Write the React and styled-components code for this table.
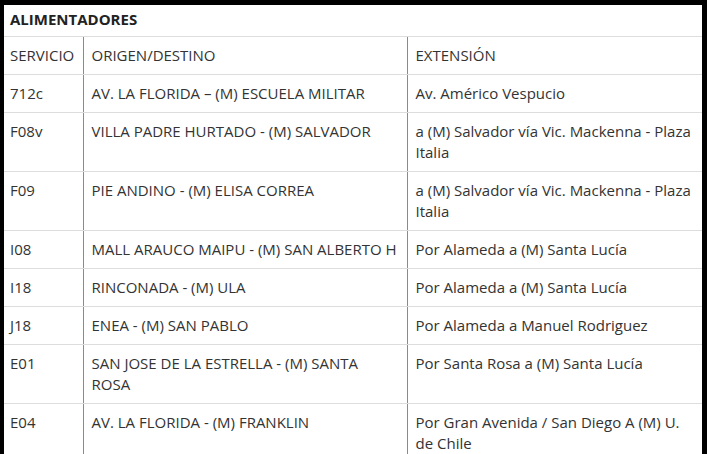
import React from 'react';
import styled, { createGlobalStyle } from 'styled-components';

const GlobalStyle = createGlobalStyle`
  html, body {
    margin: 0;
    padding: 0;
    background: #000;
  }
  body {
    padding: 5px 5px 0 4px;
    font-family: 'Open Sans', 'Liberation Sans', sans-serif;
  }
`;

const rows = [
  ['712c', 'AV. LA FLORIDA – (M) ESCUELA MILITAR', 'Av. Américo Vespucio'],
  ['F08v', 'VILLA PADRE HURTADO - (M) SALVADOR', 'a (M) Salvador vía Vic. Mackenna - Plaza Italia'],
  ['F09', 'PIE ANDINO - (M) ELISA CORREA', 'a (M) Salvador vía Vic. Mackenna - Plaza Italia'],
  ['I08', 'MALL ARAUCO MAIPU - (M) SAN ALBERTO H', 'Por Alameda a (M) Santa Lucía'],
  ['I18', 'RINCONADA - (M) ULA', 'Por Alameda a (M) Santa Lucía'],
  ['J18', 'ENEA - (M) SAN PABLO', 'Por Alameda a Manuel Rodriguez'],
  ['E01', 'SAN JOSE DE LA ESTRELLA - (M) SANTA ROSA', 'Por Santa Rosa a (M) Santa Lucía'],
  ['E04', 'AV. LA FLORIDA - (M) FRANKLIN', 'Por Gran Avenida / San Diego A (M) U. de Chile'],
];

function App() {
  return (
    <>
      <GlobalStyle />
      <Panel>
        <Table>
          <colgroup>
            <col style={{ width: 79 }} />
            <col style={{ width: 324 }} />
            <col />
          </colgroup>
          <thead>
            <tr>
              <Title colSpan={3}>ALIMENTADORES</Title>
            </tr>
            <tr>
              <Cell as="th">SERVICIO</Cell>
              <Cell as="th" $divider>ORIGEN/DESTINO</Cell>
              <Cell as="th" $divider>EXTENSIÓN</Cell>
            </tr>
          </thead>
          <tbody>
            {rows.map(([code, route, ext]) => (
              <tr key={code}>
                <Cell>{code}</Cell>
                <Cell $divider>{route}</Cell>
                <Cell $divider>{ext}</Cell>
              </tr>
            ))}
          </tbody>
        </Table>
      </Panel>
    </>
  );
}

export default App;

const Panel = styled.div`
  background: #fff;
  width: 698px;
`;

const Table = styled.table`
  width: 100%;
  border-collapse: collapse;
  table-layout: fixed;
  font-size: 15px;
  line-height: 21px;
  color: #333;
`;

const Title = styled.th`
  text-align: left;
  font-weight: 700;
  padding: 4px 6px 6px;
  color: #222;
  border-bottom: 1px solid #ddd;
`;

const Cell = styled.td`
  text-align: left;
  vertical-align: top;
  font-weight: 400;
  padding: 8px 8px 8px 6px;
  border-bottom: 1px solid #ddd;
  border-left: ${(p) => (p.$divider ? '1px solid #8a8a8a' : 'none')};
  padding-left: ${(p) => (p.$divider ? '8px' : '6px')};
`;
